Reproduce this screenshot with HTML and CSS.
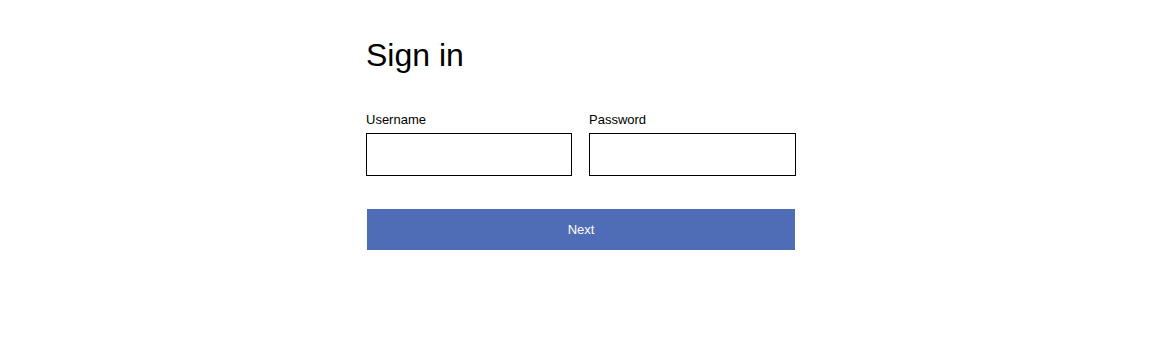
FILE: index.html
```html
<!DOCTYPE html>
<html lang="en">
<head>
<meta charset="utf-8">
<title>Sign in</title>
<link rel="stylesheet" href="styles.css">
</head>
<body>
<main class="signin">
  <h1 class="title">Sign in</h1>
  <form class="form">
    <div class="fields">
      <div class="field">
        <label class="label" for="username">Username</label>
        <input class="input" id="username" type="text">
      </div>
      <div class="field">
        <label class="label" for="password">Password</label>
        <input class="input" id="password" type="password">
      </div>
    </div>
    <button class="next" type="button">Next</button>
  </form>
</main>
</body>
</html>
```
FILE: styles.css
```css
html, body {
  margin: 0;
  padding: 0;
  background: #ffffff;
}
body {
  font-family: "Liberation Sans", Arial, sans-serif;
  color: #000000;
}
.signin {
  width: 430px;
  margin: 0 auto;
  padding-top: 37px;
  box-sizing: border-box;
}
.title {
  margin: 0;
  font-size: 32px;
  line-height: 37px;
  font-weight: 400;
}
.form {
  margin: 38px 0 0;
  display: flex;
  flex-direction: column;
}
.fields {
  display: grid;
  grid-template-columns: 206px 207px;
  column-gap: 17px;
}
.field {
  display: flex;
  flex-direction: column;
}
.label {
  font-size: 13px;
  line-height: 15px;
  margin-bottom: 6px;
}
.input {
  box-sizing: border-box;
  width: 100%;
  height: 43px;
  margin: 0;
  border: 1px solid #000000;
  border-radius: 0;
  background: #ffffff;
  padding: 0 8px;
  font: inherit;
  outline: none;
}
.next {
  margin: 33px 1px 0;
  height: 41px;
  border: none;
  border-radius: 0;
  background: #4f6cb7;
  color: #ffffff;
  font-family: "Liberation Sans", Arial, sans-serif;
  font-size: 13px;
  padding: 0;
  cursor: pointer;
}
```
